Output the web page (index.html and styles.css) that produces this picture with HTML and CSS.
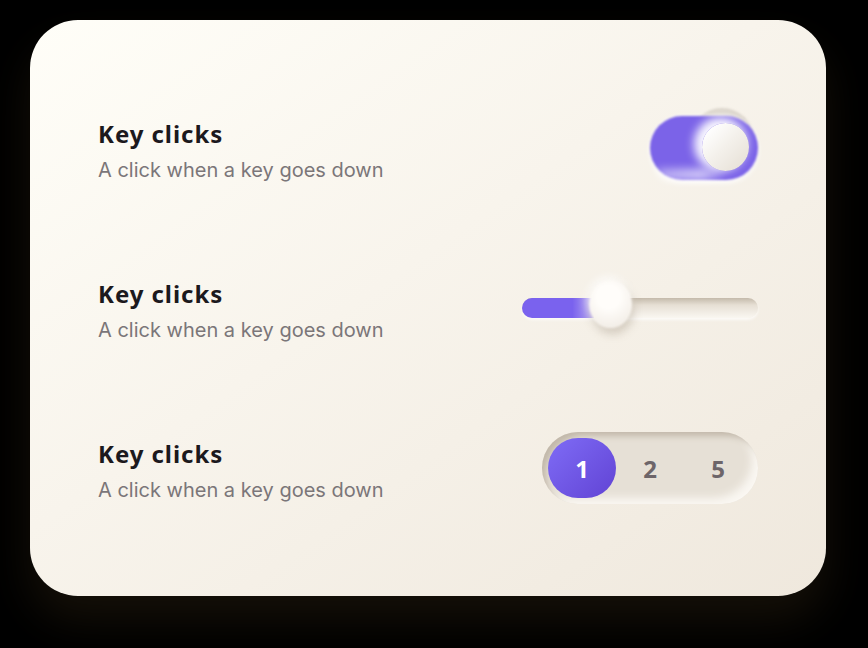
FILE: index.html
```html
<!DOCTYPE html>
<html lang="en">
<head>
<meta charset="utf-8">
<title>Settings</title>
<link rel="stylesheet" href="styles.css">
</head>
<body>
<main class="card">
  <section class="row">
    <div class="text"><h2 class="title">Key clicks</h2><p class="desc">A click when a key goes down</p></div>
    <div class="toggle" role="switch" aria-checked="true"><span class="toggle-back"></span><span class="toggle-track"></span><span class="toggle-knob"></span></div>
  </section>
  <section class="row">
    <div class="text"><h2 class="title">Key clicks</h2><p class="desc">A click when a key goes down</p></div>
    <div class="slider"><span class="slider-fill"></span><span class="slider-knob"></span></div>
  </section>
  <section class="row">
    <div class="text"><h2 class="title">Key clicks</h2><p class="desc">A click when a key goes down</p></div>
    <div class="segments"><span class="seg seg-on">1</span><span class="seg">2</span><span class="seg">5</span></div>
  </section>
</main>
</body>
</html>
```
FILE: styles.css
```css
* { box-sizing: border-box; }
html, body { margin: 0; height: 100%; background: #000; overflow: hidden; }
body { padding: 20px 42px 52px 30px; width: 868px; height: 648px; }
.card {
  width: 796px; height: 576px; border-radius: 48px;
  padding: 92px 68px; display: flex; flex-direction: column; gap: 88px;
  background: linear-gradient(145deg, #fffef8 0%, #f8f4ec 45%, #efe8dd 100%);
  box-shadow: 0 24px 44px rgba(70, 52, 28, .3);
}
.row { height: 72px; display: flex; align-items: center; justify-content: space-between; }
.text { padding-top: 7px; }
.title { margin: 0 0 6px; font: 700 24px/30px "Noto Sans", sans-serif; letter-spacing: .95px; color: #1c191d; }
.desc { margin: 0; font: 400 20px/30px Inter, sans-serif; color: #7b7679; }
.toggle { position: relative; width: 108px; height: 64px; }
.toggle-back { position: absolute; left: 40px; top: -8px; width: 64px; height: 64px; border-radius: 50%; background: #dcd6cc; filter: blur(1px); }
.toggle-track {
  position: absolute; inset: 0; border-radius: 32px; filter: blur(.8px);
  background: #7b63e8;
  box-shadow: 0 3px 5px rgba(255,255,255,.9), 0 -1px 3px rgba(255,255,255,.5);
}
.toggle-track::after { content: ""; position: absolute; left: 6px; right: 10px; bottom: 0; height: 11px; border-radius: 0 0 30px 30px; background: linear-gradient(90deg, rgba(255,255,255,.45), rgba(255,255,255,.7) 50%, rgba(255,255,255,0) 75%); filter: blur(4px); }
.toggle-knob {
  position: absolute; left: 52px; top: 7px; width: 47px; height: 48px; border-radius: 50%;
  background: linear-gradient(135deg, #ffffff 12%, #f3f0ea 50%, #e8e2d9 88%);
  box-shadow: -5px -3px 10px 3px rgba(255,255,255,.95);
}
.slider {
  position: relative; width: 236px; height: 20px; border-radius: 10px;
  background: linear-gradient(180deg, #c4baab 0%, #e6dfd4 35%, #f1ece4 70%, #faf7f1 100%);
  box-shadow: 0 2px 3px rgba(255,255,255,.7);
}
.slider-fill { position: absolute; left: 0; top: 0; bottom: 0; width: 72px; border-radius: 10px 0 0 10px; background: linear-gradient(90deg, #7a62ee 0%, #7a62ee 70%, #b7a8ee 100%); }
.slider-knob {
  position: absolute; left: 67px; top: -18px; width: 43px; height: 48px; border-radius: 50%; filter: blur(.8px);
  background: radial-gradient(circle at 45% 35%, #fffdfa 30%, #f1ece5 85%);
  box-shadow: 2px 6px 8px rgba(150,135,115,.35), -2px -3px 8px rgba(255,255,255,.8);
}
.segments {
  width: 216px; height: 72px; border-radius: 36px; padding: 6px; display: flex;
  background: #e6e0d6;
  box-shadow: inset 6px 6px 6px -2px #c2b8aa, inset -8px -8px 8px -2px #faf7f2;
}
.seg { width: 68px; height: 60px; padding-top: 2px; display: flex; align-items: center; justify-content: center; border-radius: 32px; font: 700 24px/1 "Noto Sans", sans-serif; color: #6d6569; }
.seg-on { color: #fff; background: linear-gradient(135deg, #7f6cf6, #6143d4); }
```
